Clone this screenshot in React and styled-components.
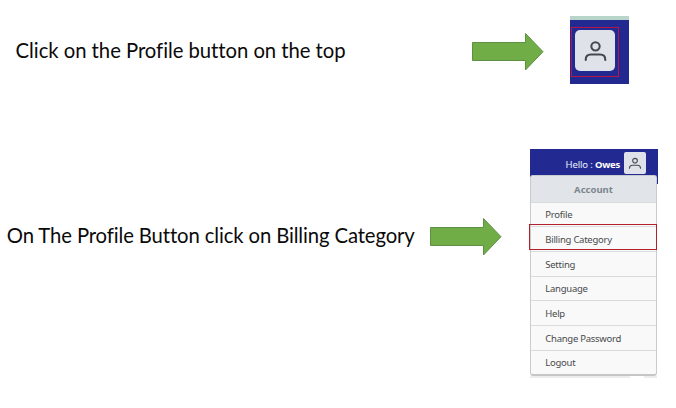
import React from "react";
import styled, { createGlobalStyle, css } from "styled-components";

const GlobalStyle = createGlobalStyle`
  * { box-sizing: border-box; }
  body { margin: 0; background: #fff; }
`;

const Page = styled.main`
  width: 676px;
  height: 408px;
  padding-top: 16px;
  display: flex;
  flex-direction: column;
  gap: 65px;
  overflow: hidden;
  background: #fff;
`;

const Step = styled.section`
  display: grid;
  grid-template-columns: ${(p) => p.$columns};
  align-items: start;
`;

const Caption = styled.p`
  margin: ${(p) => p.$top}px 0 0;
  padding-left: ${(p) => p.$indent}px;
  font: 400 20.3px/28px Lato, sans-serif;
  letter-spacing: ${(p) => p.$tracking}px;
  white-space: nowrap;
  color: #0a0a0a;
`;

const ArrowShape = styled.svg`
  display: block;
  width: 74px;
  height: 40px;
  margin-top: ${(p) => p.$top}px;
`;

const ProfileClip = styled.div`
  width: 59px;
  height: 68px;
  padding: 7px 0 0 1px;
  background: #222a91;
  border-top: 4px solid #b9d5c9;
`;

const Highlight = styled.div`
  width: 48px;
  height: 50px;
  padding: 2px 0 0 3px;
  border: 1px solid #b5164a;
`;

const ProfileButton = styled.button`
  display: flex;
  align-items: center;
  justify-content: center;
  flex: none;
  width: ${(p) => p.$width}px;
  height: ${(p) => p.$height}px;
  padding: 0 0 1px;
  border: 0;
  border-radius: ${(p) => p.$radius}px;
  background: #dfe2e9;
`;

const AccountPanel = styled.div`
  width: 128px;
  height: 229px;
  display: flex;
  flex-direction: column;
`;

const NavBar = styled.header`
  display: flex;
  align-items: flex-start;
  justify-content: flex-end;
  gap: 4px;
  height: 35px;
  padding: 3px 12px 0 0;
  background: #222a91;
`;

const Greeting = styled.span`
  font: 400 9.5px/13px "Noto Sans", sans-serif;
  letter-spacing: -0.15px;
  padding-top: 6px;
  color: #eef0fc;
  white-space: nowrap;
  b { font-weight: 700; color: #fff; letter-spacing: -0.25px; }
`;

const Menu = styled.nav`
  width: 127px;
  height: 201px;
  flex: none;
  margin-top: -9px;
  display: grid;
  grid-template-rows: 25.5px repeat(7, 24.7px);
  border: 1px solid #c9cccf;
  border-bottom: 2px solid #c5c6c8;
  border-radius: 3px;
  background: #f9f9f9;
`;

const MenuTitle = styled.div`
  display: flex;
  align-items: center;
  justify-content: center;
  padding-top: 1px;
  border-radius: 3px 3px 0 0;
  background: #e1e5e9;
  font: 700 9.5px/13px "Noto Sans", sans-serif;
  color: #7b858e;
`;

const MenuItem = styled.a`
  display: flex;
  align-items: center;
  padding: 1px 0 0 14.3px;
  border-top: 1px solid #dadbdd;
  font: 400 9.5px/13px "Noto Sans", sans-serif;
  letter-spacing: -0.26px;
  color: #47494c;
  ${(p) => p.$selected && css`
    position: relative;
    z-index: 1;
    &::after {
      content: "";
      position: absolute;
      inset: -3px -1px 1px -2px;
      border: 1px solid #b3202b;
    }
  `}
`;

const PageEdge = styled.div`
  display: flex;
  justify-content: space-between;
  flex: none;
  height: 2px;
  width: 127px;
  &::before, &::after { content: ""; height: 2px; background: #ededee; }
  &::before { width: 100px; }
  &::after { width: 13px; }
`;

const items = ["Profile", "Billing Category", "Setting", "Language", "Help", "Change Password", "Logout"];

function Arrow({ top }) {
  return (
    <ArrowShape $top={top} viewBox="0 0 74 40">
      <path d="M.5 10.5H53.5V1.5L71 19.7 53.5 38V28.5H.5Z" fill="#70ad47" stroke="#5f8f43" />
    </ArrowShape>
  );
}

function Person({ size, weight }) {
  return (
    <svg width={size} height={size} viewBox="0 0 24 24" fill="none" stroke="#454a50" strokeWidth={weight} strokeLinecap="round">
      <circle cx="12" cy="8" r="4" />
      <path d="M2.6 21c0-3.6 1.9-5.1 5-5.1h8.8c3.1 0 5 1.5 5 5.1" />
    </svg>
  );
}

export default function App() {
  return (
    <>
      <GlobalStyle />
      <Page>
        <Step $columns="472px 98px 59px">
          <Caption $top={20} $indent={15.6} $tracking={-0.04}>Click on the Profile button on the top</Caption>
          <Arrow top={16} />
          <ProfileClip>
            <Highlight>
              <ProfileButton $width={40} $height={41} $radius={5} aria-label="Profile">
                <Person size={25} weight={2} />
              </ProfileButton>
            </Highlight>
          </ProfileClip>
        </Step>
        <Step $columns="430px 100px 128px">
          <Caption $top={72} $indent={6.8} $tracking={-0.12}>On The Profile Button click on Billing Category</Caption>
          <Arrow top={68} />
          <AccountPanel>
            <NavBar>
              <Greeting>Hello : <b>Owes</b></Greeting>
              <ProfileButton $width={22} $height={22} $radius={2} aria-label="Profile">
                <Person size={14} weight={1.9} />
              </ProfileButton>
            </NavBar>
            <Menu>
              <MenuTitle>Account</MenuTitle>
              {items.map((name) => (
                <MenuItem key={name} $selected={name === "Billing Category"}>{name}</MenuItem>
              ))}
            </Menu>
            <PageEdge />
          </AccountPanel>
        </Step>
      </Page>
    </>
  );
}
